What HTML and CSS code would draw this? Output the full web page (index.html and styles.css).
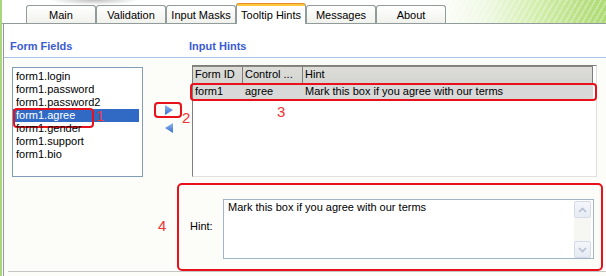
FILE: index.html
```html
<!DOCTYPE html>
<html>
<head>
<meta charset="utf-8">
<link rel="stylesheet" href="styles.css">
</head>
<body>
<div class="window">
  <div class="tabstrip">
    <div class="tab">Main</div>
    <div class="tab">Validation</div>
    <div class="tab">Input Masks</div>
    <div class="tab active">Tooltip Hints</div>
    <div class="tab">Messages</div>
    <div class="tab">About</div>
  </div>
  <div class="panel">
    <div class="heads">
      <div class="head head-fields">Form Fields</div>
      <div class="head">Input Hints</div>
    </div>
    <div class="content">
      <div class="top-row">
        <ul class="listbox">
          <li>form1.login</li>
          <li>form1.password</li>
          <li>form1.password2</li>
          <li class="selected">form1.agree<span class="num num-1">1</span></li>
          <li>form1.gender</li>
          <li>form1.support</li>
          <li>form1.bio</li>
        </ul>
        <div class="movers">
          <div class="mover mover-marked">
            <svg width="8" height="10" viewBox="0 0 8 10"><defs><linearGradient id="g1" x1="0" y1="0" x2="0" y2="1"><stop offset="0" stop-color="#8fb6ee"/><stop offset="1" stop-color="#3a6ed2"/></linearGradient></defs><polygon points="0,0 8,5 0,10" fill="url(#g1)"/></svg>
            <span class="num num-2">2</span>
          </div>
          <div class="mover">
            <svg width="8" height="10" viewBox="0 0 8 10"><defs><linearGradient id="g2" x1="0" y1="0" x2="0" y2="1"><stop offset="0" stop-color="#8fb6ee"/><stop offset="1" stop-color="#3a6ed2"/></linearGradient></defs><polygon points="8,0 0,5 8,10" fill="url(#g2)"/></svg>
          </div>
        </div>
        <div class="grid">
          <div class="grid-head">
            <div class="hcell c1">Form ID</div>
            <div class="hcell c2">Control ...</div>
            <div class="hcell c3">Hint</div>
          </div>
          <div class="grid-row">
            <div class="cell c1">form1</div>
            <div class="cell c2">agree</div>
            <div class="cell c3">Mark this box if you agree with our terms</div>
          </div>
          <span class="num num-3">3</span>
        </div>
      </div>
      <div class="hint-box">
        <span class="num num-4">4</span>
        <div class="hint-label">Hint:</div>
        <div class="textarea">
          <div class="textarea-text">Mark this box if you agree with our terms</div>
          <div class="scrollbar">
            <div class="sb-btn"><svg width="9" height="6" viewBox="0 0 9 6"><polyline points="1,5 4.5,1.5 8,5" fill="none" stroke="#b4bfd2" stroke-width="1.6"/></svg></div>
            <div class="sb-track"></div>
            <div class="sb-btn"><svg width="9" height="6" viewBox="0 0 9 6"><polyline points="1,1 4.5,4.5 8,1" fill="none" stroke="#b4bfd2" stroke-width="1.6"/></svg></div>
          </div>
        </div>
      </div>
      <div class="footer-line"></div>
    </div>
  </div>
</div>
</body>
</html>
```
FILE: styles.css
```css
* { box-sizing: border-box; }
html, body { margin: 0; padding: 0; }
body {
  width: 606px;
  height: 276px;
  overflow: hidden;
  background: #fff;
  font: 11px/14px "Liberation Sans", Arial, sans-serif;
  color: #000;
}
.window {
  height: 276px;
  border-left: 2px solid #a9d57c;
  display: flex;
  flex-direction: column;
}
.tabstrip {
  height: 24px;
  flex: none;
  border-bottom: 1px solid #919b9c;
  display: flex;
  align-items: flex-end;
  padding-left: 24px;
  background:
    radial-gradient(ellipse 45px 5px at 92px 0, rgba(140,140,140,0.55), rgba(140,140,140,0)),
    repeating-linear-gradient(120deg, rgba(255,255,255,0) 0 3px, rgba(255,255,255,0.28) 3px 5px),
    linear-gradient(90deg, #fff 0, #fff 430px, #eef8e2 485px, #d2eeac 535px, #b9e084 580px, #addb74 604px);
}
.tab {
  width: 70px;
  height: 18px;
  border: 1px solid #919b9c;
  border-bottom: 0;
  border-radius: 3px 3px 0 0;
  padding-top: 2px;
  text-align: center;
  white-space: nowrap;
  background: linear-gradient(#ffffff, #f1f1ec);
}
.tab.active {
  height: 21px;
  margin-bottom: -1px;
  border-top: 1px solid #e68b2c;
  padding-top: 4px;
  background: linear-gradient(#ffc73c 0 2px, #fff 2px);
}
.panel {
  flex: 1;
  margin-left: 1px;
  border-left: 1px solid #919b9c;
  display: flex;
  flex-direction: column;
}
.heads {
  height: 34px;
  flex: none;
  border-bottom: 1px solid #a9c3ea;
  display: flex;
  padding: 15px 0 0 6px;
  font-weight: bold;
  color: #3b5bd0;
  background: #fff;
}
.head-fields { width: 179px; }
.content {
  flex: 1;
  background: #fcfcf9;
  padding: 7px 0 0 8px;
}
.top-row {
  display: flex;
  align-items: flex-start;
}
.listbox {
  width: 131px;
  height: 110px;
  margin: 2px 0 0;
  padding: 2px 0 0;
  list-style: none;
  border: 1px solid #7f9db9;
  background: #fff;
}
.listbox li {
  position: relative;
  line-height: 13px;
  height: 13px;
  padding-left: 3px;
  margin-right: 3px;
  white-space: nowrap;
}
.listbox li.selected {
  background: #316ac5;
  color: #fff;
}
.listbox li.selected::before {
  content: "";
  position: absolute;
  left: 0;
  top: -1px;
  width: 77px;
  height: 16px;
  border: 2px solid #e8101a;
  border-radius: 4px;
}
.num {
  position: absolute;
  font-size: 15px;
  line-height: 15px;
  color: #f03535;
}
.num-1 { left: 83px; top: -1px; }
.movers {
  width: 28px;
  margin: 37px 0 0 11px;
  display: flex;
  flex-direction: column;
  gap: 2px;
}
.mover {
  position: relative;
  height: 16px;
  display: flex;
  align-items: center;
  justify-content: center;
  padding-left: 2px;
  border: 2px solid transparent;
}
.mover-marked {
  border-color: #e8101a;
  border-radius: 4px;
}
.num-2 { left: 26px; top: 6px; }
.grid {
  position: relative;
  width: 405px;
  height: 112px;
  margin-left: 10px;
  border: 1px solid;
  border-color: #7d7d7d #e0e0e0 #e0e0e0 #7d7d7d;
  background: #fff;
}
.grid-head, .grid-row {
  display: flex;
}
.grid-head {
  width: 400px;
  height: 17px;
  border-top: 1px solid #8a8878;
}
.hcell {
  height: 16px;
  padding: 0 0 0 2px;
  background: linear-gradient(#dcdcd8, #d4d4d0);
  border-right: 1px solid #7d7d7d;
  white-space: nowrap;
  overflow: hidden;
}
.c1 { width: 50px; }
.c2 { width: 60px; }
.c3 { width: 290px; }
.grid-row {
  position: relative;
  height: 17px;
  background: #d8d8d8;
  width: 400px;
}
.grid-row::after {
  content: "";
  position: absolute;
  left: -3px;
  right: -4px;
  top: 0;
  bottom: -1px;
  border: 2px solid #e8101a;
  border-radius: 4px;
}
.cell {
  padding: 1px 0 0 2px;
  white-space: nowrap;
}
.grid-row .c3 { flex: 1; }
.num-3 { left: 84px; top: 38px; }
.hint-box {
  position: relative;
  width: 426px;
  height: 88px;
  margin: 6px 0 0 165px;
  border: 2px solid #e8101a;
  border-radius: 5px;
  display: flex;
  align-items: flex-start;
  padding: 14px 0 0 11px;
}
.num-4 { left: -21px; top: 33px; }
.hint-label {
  width: 33px;
  margin-top: 20px;
}
.textarea {
  width: 371px;
  height: 60px;
  border: 1px solid #a3b3c8;
  background: #fff;
  display: flex;
}
.textarea-text {
  flex: 1;
  padding: 0 4px;
}
.scrollbar {
  width: 17px;
  margin: 1px 2px 0 0;
  display: flex;
  flex-direction: column;
  background: #f6f6f2;
}
.sb-btn {
  height: 17px;
  border: 1px solid #d3dbe8;
  border-radius: 2px;
  background: linear-gradient(#f4f6fa, #e6ebf3);
  display: flex;
  align-items: center;
  justify-content: center;
}
.sb-track { flex: 1; }
.footer-line {
  margin-left: -4px;
  border-top: 1px solid #c6c6c6;
}
```
